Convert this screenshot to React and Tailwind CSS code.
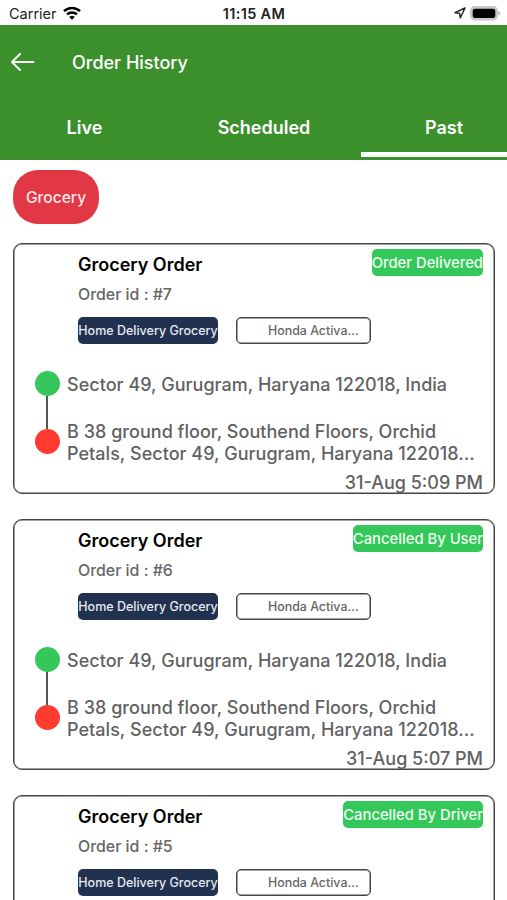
const tabs = ["Live", "Scheduled", "Past"];

const pickup = "Sector 49, Gurugram, Haryana 122018, India";
const drop = ["B 38 ground floor, Southend Floors, Orchid", "Petals, Sector 49, Gurugram, Haryana 122018..."];

const orders = [
    { id: 7, status: "Order Delivered", time: "31-Aug 5:09 PM", pickup, drop },
    { id: 6, status: "Cancelled By User", time: "31-Aug 5:07 PM", pickup, drop },
    { id: 5, status: "Cancelled By Driver" },
];

function StatusBar() {
    return (
        <div className="grid h-[25px] grid-cols-3 items-center pt-[3px] pl-[9px] pr-[6px] text-[#222]">
            <div className="flex items-center gap-[6px] text-[14.5px]">
                <span>Carrier</span>
                <svg className="-mt-[2px]" width="18" height="14" viewBox="0 0 18 14" fill="none" stroke="#000" strokeWidth="2.5">
                    <path d="M1 5.1a11.6 11.6 0 0 1 16 0" />
                    <path d="M4 8.4a7.2 7.2 0 0 1 10 0" />
                    <path d="M9 13.7 6.3 11a4 4 0 0 1 5.4 0Z" fill="#000" stroke="none" />
                </svg>
            </div>
            <div className="-ml-[2px] text-center text-[14.5px] font-semibold tracking-[0.35px] whitespace-nowrap">11:15 AM</div>
            <div className="-mt-[2px] flex items-center justify-end gap-[4px]">
                <svg width="12" height="12" viewBox="0 0 12 12" fill="none" stroke="#222" strokeWidth="1.4" strokeLinejoin="round">
                    <path d="M11 1 1 5.7l4.6.6.7 4.6Z" />
                </svg>
                <svg width="31" height="15" viewBox="0 0 31 15">
                    <rect x="0.8" y="0.8" width="26.4" height="13" rx="4" fill="#d0d0d0" stroke="#c4c4c4" strokeWidth="1.5" />
                    <rect x="2.7" y="2.7" width="22.6" height="9.2" rx="2" fill="#000" />
                    <path d="M28.5 5v4.6q1.8-.7 1.8-2.3T28.5 5" fill="#b5b5b5" />
                </svg>
            </div>
        </div>
    );
}

function Header() {
    return (
        <header className="h-[135px] bg-[#3c902c] text-white">
            <div className="flex h-[74px] items-center pl-[11px]">
                <svg width="24" height="18" viewBox="0 0 24 18" fill="none" stroke="currentColor" strokeWidth="1.9" strokeLinecap="round" strokeLinejoin="round">
                    <path d="M22.5 9H1M9 1 1 9l8 8" />
                </svg>
                <h1 className="ml-[37px] text-[18px] font-medium">Order History</h1>
            </div>
            <nav className="flex h-[58px] w-[540px]">
                {tabs.map(t => (
                    <button key={t} className={`flex items-center justify-center text-[18px] font-semibold ${t === "Live" ? "w-[169px] pb-[2px]" : t === "Past" ? "w-[165px] border-b-[5px] border-white pt-[3px] pl-px" : "w-[190px] mr-[2px] pb-[2px]"}`}>
                        {t}
                    </button>
                ))}
            </nav>
        </header>
    );
}

function OrderCard({ order }) {
    return (
        <article className="relative h-[251px] shrink-0 rounded-[9px] border border-[#454545] shadow-[inset_0_0_0_0.5px_#454545]">
            <span className="absolute top-[5px] right-[11px] flex h-[27px] items-center rounded-[5px] bg-[#34c759] pt-[2px] text-[14.8px] font-medium text-[#effff2]">
                {order.status}
            </span>
            <div className="pt-[8px] pl-[64px]">
                <h2 className="text-[18px] leading-[26px] font-semibold text-black">Grocery Order</h2>
                <p className="mt-[5px] text-[15.9px] leading-[24px] font-medium text-[#666]">Order id : #{order.id}</p>
                <div className="mt-[10px] flex gap-[18px]">
                    <span className="flex h-[27px] w-[140px] items-center justify-center rounded-[5px] bg-[#22314f] pt-px text-[12.5px] font-medium whitespace-nowrap text-[#e5eaf2]">Home Delivery Grocery</span>
                    <span className="flex h-[27px] w-[135px] items-center rounded-[5px] border border-[#454545] pt-px pl-[31px] text-[12.4px] font-medium text-[#666] shadow-[inset_0_0_0_0.5px_#454545]">Honda Activa...</span>
                </div>
            </div>
            {order.pickup && (
                <>
                    <div className="mt-[27px] flex pl-[21px] text-[18px] font-medium text-[#626262]">
                        <div className="flex w-[25px] shrink-0 flex-col items-center">
                            <span className="size-[25px] rounded-full bg-[#34c759]" />
                            <span className="mr-[2px] h-[33px] w-[2px] bg-[#555]" />
                            <span className="size-[25px] rounded-full bg-[#ff3b30]" />
                        </div>
                        <div className="ml-[7px] leading-[22px] tracking-[0.03px] whitespace-nowrap">
                            <p className="pt-[3px]">{order.pickup}</p>
                            <p className="mt-[25px]">{order.drop[0]}<br />{order.drop[1]}</p>
                        </div>
                    </div>
                    <p className="mt-[7px] pr-[11px] text-right text-[18px] leading-[22px] font-medium text-[#626262]">{order.time}</p>
                </>
            )}
        </article>
    );
}

export default function App() {
    return (
        <div className="flex h-[900px] w-[507px] flex-col overflow-hidden bg-white font-['Inter',sans-serif]">
            <StatusBar />
            <Header />
            <main className="flex min-h-0 flex-1 flex-col pt-[10px] pr-[12px] pl-[13px]">
                <button className="h-[54px] w-[86px] shrink-0 rounded-[25px] bg-[#e23744] pt-px text-[15.6px] font-medium text-[#ffeaec]">Grocery</button>
                <div className="mt-[19px] flex flex-col gap-[25px]">
                    {orders.map(o => <OrderCard key={o.id} order={o} />)}
                </div>
            </main>
        </div>
    );
}
